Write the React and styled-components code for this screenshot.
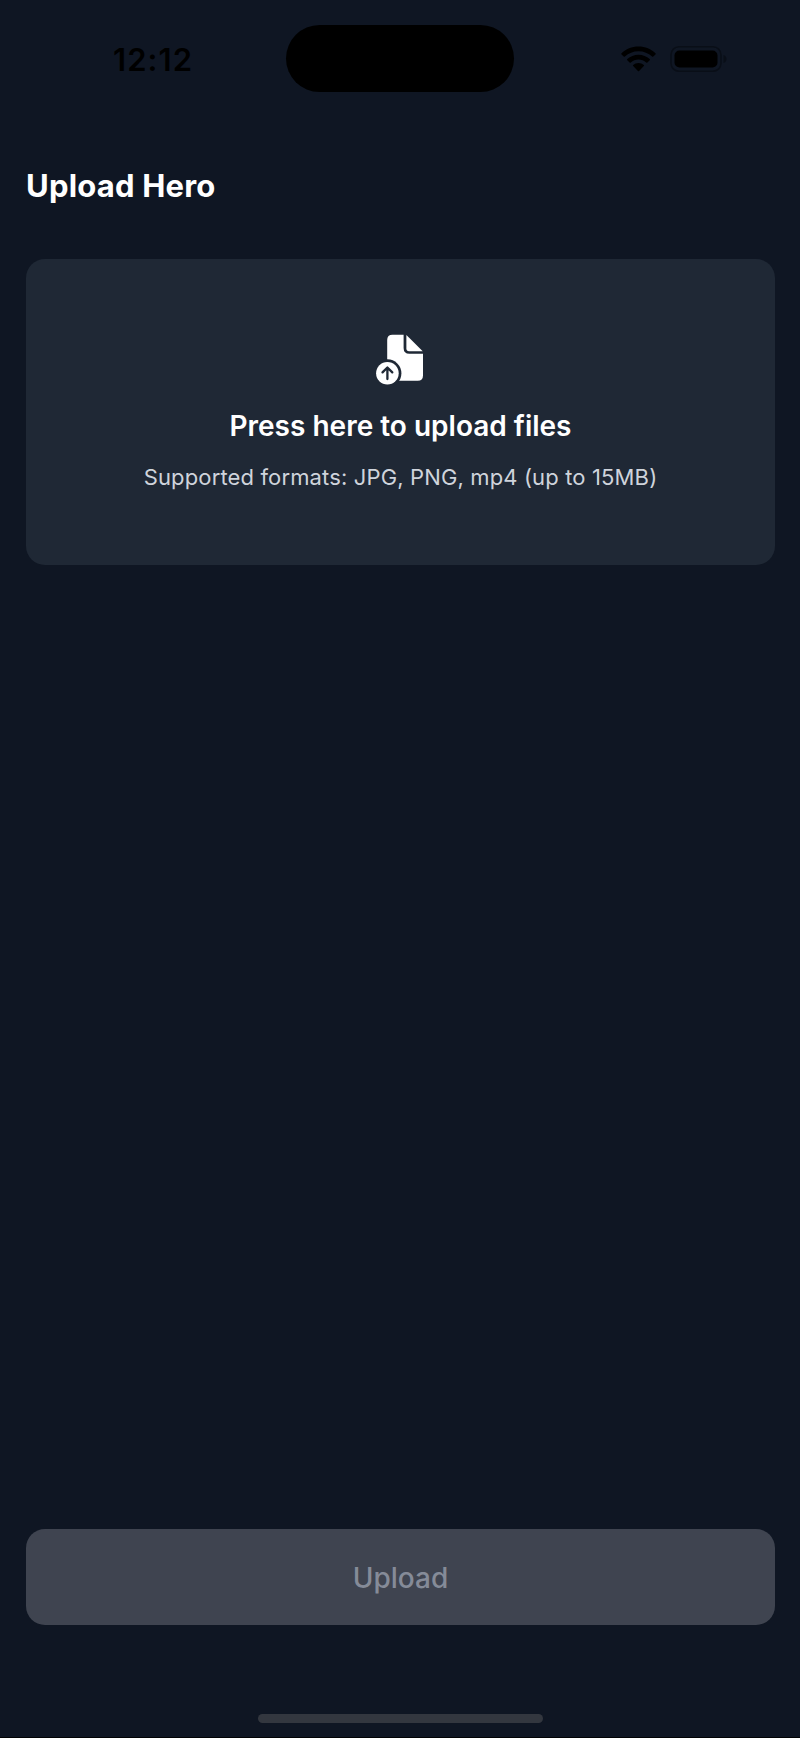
import React from 'react';
import styled, { createGlobalStyle } from 'styled-components';

const GlobalStyle = createGlobalStyle`
  *, *::before, *::after { box-sizing: border-box; }
  body { margin: 0; background: #0f1623; }
`;

const Screen = styled.div`
  display: flex;
  flex-direction: column;
  width: 800px;
  height: 1738px;
  background: #0f1623;
  border-bottom: 1px solid #010204;
  font-family: Inter, 'Liberation Sans', sans-serif;
  overflow: hidden;
`;

const StatusBar = styled.header`
  display: grid;
  grid-template-columns: 286px 228px 286px;
  align-items: center;
  height: 117px;
  color: #000;
`;

const Clock = styled.time`
  padding: 2px 0 0 113px;
  font-size: 31px;
  line-height: 40px;
  font-weight: 600;
  letter-spacing: 1.1px;
`;

const Island = styled.div`
  height: 67px;
  border-radius: 34px;
  background: #000;
`;

const Indicators = styled.div`
  display: flex;
  align-items: center;
  gap: 13px;
  padding-left: 107px;
`;

const Main = styled.main`
  display: flex;
  flex-direction: column;
  flex: 1;
  padding: 49px 25px 0 26px;
`;

const Title = styled.h1`
  margin: 0 0 53px;
  font-size: 31px;
  line-height: 40px;
  font-weight: 700;
  letter-spacing: 0.2px;
  white-space: nowrap;
  color: #fff;
`;

const DropZone = styled.section`
  display: flex;
  flex-direction: column;
  align-items: center;
  height: 306px;
  padding-top: 73px;
  border-radius: 19px;
  background: #1f2835;
  white-space: nowrap;
`;

const DropTitle = styled.h2`
  margin: 20px 0 0;
  font-size: 28px;
  line-height: 40px;
  font-weight: 600;
  letter-spacing: 0;
  color: #fff;
`;

const DropHint = styled.p`
  margin: 16px 0 0;
  font-size: 22px;
  line-height: 30px;
  letter-spacing: 0.14px;
  color: #cfd4dc;
`;

const UploadButton = styled.button`
  height: 96px;
  margin-top: auto;
  padding: 2px 0 0;
  border: 0;
  border-radius: 19px;
  background: #3f4450;
  color: #858b98;
  font: 500 28px/40px Inter, 'Liberation Sans', sans-serif;
`;

const Footer = styled.footer`
  display: flex;
  justify-content: center;
  align-items: flex-end;
  height: 112px;
  padding-bottom: 14px;
`;

const HomeIndicator = styled.div`
  width: 285px;
  height: 9px;
  border-radius: 5px;
  background: #33373f;
`;

function WifiIcon() {
  return (
    <svg width="35" height="26" viewBox="0 0 35 26" fill="#000">
      <path d="M17.5 0.5C24.2 0.5 30.2 3.1 34.5 7.3Q35 7.8 34.5 8.4L32.3 10.6Q31.7 11.1 31.1 10.6C27.4 7.2 22.8 5.3 17.5 5.3S7.6 7.2 3.9 10.6Q3.3 11.1 2.7 10.6L0.5 8.4Q0 7.8 0.5 7.3C4.8 3.1 10.8 0.5 17.5 0.5Z" />
      <path d="M17.5 8.8C21.8 8.8 25.7 10.4 28.7 13.1Q29.3 13.7 28.7 14.3L26.4 16.5Q25.8 17 25.2 16.5C23.1 14.7 20.4 13.6 17.5 13.6S11.9 14.7 9.8 16.5Q9.2 17 8.6 16.5L6.3 14.3Q5.7 13.7 6.3 13.1C9.3 10.4 13.2 8.8 17.5 8.8Z" />
      <path d="M17.5 16.9C19.5 16.9 21.4 17.7 22.8 18.9Q23.4 19.5 22.8 20.1L18.1 24.9Q17.5 25.5 16.9 24.9L12.2 20.1Q11.6 19.5 12.2 18.9C13.6 17.7 15.5 16.9 17.5 16.9Z" />
    </svg>
  );
}

function BatteryIcon() {
  return (
    <svg width="58" height="26" viewBox="0 0 58 26">
      <rect x="2" y="0.8" width="50" height="24.4" rx="8" fill="none" stroke="#090e17" strokeWidth="1.5" />
      <rect x="5.5" y="4.5" width="43" height="17" rx="5" fill="#000" />
      <path d="M54.5 9Q57.5 10.2 57.5 13T54.5 17Z" fill="#090e17" />
    </svg>
  );
}

function FileUploadIcon() {
  return (
    <svg width="50" height="54" viewBox="375 332 50 54">
      <path d="M391.5 334.7H402.6V348Q402.6 353.8 408.4 353.8H422V375.5Q422 380.8 416.7 380.8H391.5Q386.2 380.8 386.2 375.5V340Q386.2 334.7 391.5 334.7Z" fill="#fff" />
      <path d="M405.4 334.9L421.7 351.2H408Q405.4 351.2 405.4 348.6Z" fill="#fff" />
      <circle cx="386.4" cy="373.3" r="14" fill="#1f2835" />
      <circle cx="386.4" cy="373.3" r="11.3" fill="#fff" />
      <path d="M386.4 379V368M381.5 372.4L386.4 367.5L391.3 372.4" fill="none" stroke="#1f2835" strokeWidth="2.3" strokeLinecap="round" strokeLinejoin="round" />
    </svg>
  );
}

export default function App() {
  return (
    <>
      <GlobalStyle />
      <Screen>
        <StatusBar>
          <Clock>12:12</Clock>
          <Island />
          <Indicators>
            <WifiIcon />
            <BatteryIcon />
          </Indicators>
        </StatusBar>
        <Main>
          <Title>Upload Hero</Title>
          <DropZone>
            <FileUploadIcon />
            <DropTitle>Press here to upload files</DropTitle>
            <DropHint>Supported formats: JPG, PNG, mp4 (up to 15MB)</DropHint>
          </DropZone>
          <UploadButton disabled>Upload</UploadButton>
        </Main>
        <Footer>
          <HomeIndicator />
        </Footer>
      </Screen>
    </>
  );
}
